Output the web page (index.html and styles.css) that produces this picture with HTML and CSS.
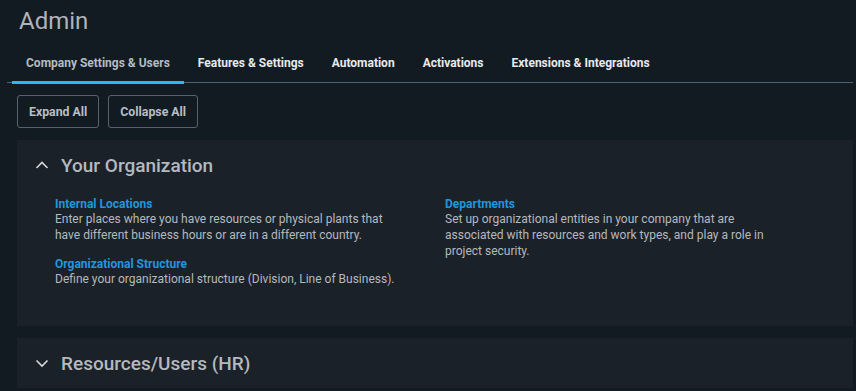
FILE: index.html
```html
<!DOCTYPE html>
<html>

<head>
    <title>Admin</title>
    <meta charset="UTF-8">
    <link rel="stylesheet" href="styles.css">
</head>

<body>
    <div class="page">
        <h1 class="page-title">Admin</h1>

        <div class="tabs">
            <a class="tab active">Company Settings &amp; Users</a>
            <a class="tab">Features &amp; Settings</a>
            <a class="tab">Automation</a>
            <a class="tab">Activations</a>
            <a class="tab">Extensions &amp; Integrations</a>
        </div>

        <div class="toolbar">
            <button class="btn">Expand All</button>
            <button class="btn">Collapse All</button>
        </div>

        <div class="section open">
            <div class="section-header">
                <svg class="chevron" width="14" height="14" viewBox="0 0 14 14">
                    <polyline points="1.5,10 7,4.5 12.5,10" fill="none" stroke="#d4d8dc" stroke-width="1.6" />
                </svg>
                <span class="section-title">Your Organization</span>
            </div>
            <div class="section-body">
                <div class="column">
                    <div class="item">
                        <a class="item-link">Internal Locations</a>
                        <p>Enter places where you have resources or physical plants that have different business hours or are in a different country.</p>
                    </div>
                    <div class="item">
                        <a class="item-link">Organizational Structure</a>
                        <p>Define your organizational structure (Division, Line of Business).</p>
                    </div>
                </div>
                <div class="column">
                    <div class="item">
                        <a class="item-link">Departments</a>
                        <p>Set up organizational entities in your company that are associated with resources and work types, and play a role in project security.</p>
                    </div>
                </div>
            </div>
        </div>

        <div class="section">
            <div class="section-header">
                <svg class="chevron" width="14" height="14" viewBox="0 0 14 14">
                    <polyline points="1.5,4.5 7,10 12.5,4.5" fill="none" stroke="#d4d8dc" stroke-width="1.6" />
                </svg>
                <span class="section-title">Resources/Users (HR)</span>
            </div>
        </div>
    </div>
</body>

</html>
```

FILE: styles.css
```css
body {
    margin: 0;
    background-color: #131b22;
    font-family: Roboto, "Liberation Sans", sans-serif;
    color: #b4b9be;
    overflow: hidden;
}

.page {
    padding: 0 3px 0 7px;
}

.page-title {
    margin: 0;
    padding: 7px 0 0 12px;
    height: 35px;
    font-size: 24px;
    font-weight: 400;
    color: #aeb4b9;
}

.tabs {
    display: flex;
    height: 40px;
    padding-left: 5px;
    border-bottom: 1px solid #4a6274;
}

.tab {
    padding: 14px 14px 0;
    font-size: 12px;
    font-weight: 700;
    color: #e6eaee;
    border-bottom: 3px solid transparent;
    margin-bottom: -2px;
}

.tab.active {
    color: #b4bcc3;
    border-bottom-color: #29b6f6;
}

.toolbar {
    display: flex;
    gap: 9px;
    padding: 12px 0 0 10px;
}

.btn {
    height: 33px;
    padding: 0 11px;
    background-color: transparent;
    border: 1px solid #56636e;
    border-radius: 3px;
    font-family: Roboto, "Liberation Sans", sans-serif;
    font-size: 12.3px;
    font-weight: 700;
    color: #b8bec4;
}

.section {
    margin: 12px 0 0 10px;
    background-color: #1b2129;
}

.section-header {
    display: flex;
    align-items: center;
    height: 50px;
    padding-left: 18px;
}

.chevron {
    margin-right: 12px;
}

.section-title {
    font-size: 19px;
    font-weight: 500;
    color: #b4b9be;
}

.section-body {
    display: grid;
    grid-template-columns: 390px 390px;
    padding: 7px 38px 39px;
}

.item {
    max-width: 340px;
    margin-bottom: 14px;
}

.item:last-child {
    margin-bottom: 0;
}

.item-link {
    display: block;
    font-size: 12px;
    font-weight: 700;
    color: #2196dc;
    line-height: 14px;
}

.item p {
    margin: 0;
    font-size: 12px;
    line-height: 16px;
    color: #b4b9be;
}
```
